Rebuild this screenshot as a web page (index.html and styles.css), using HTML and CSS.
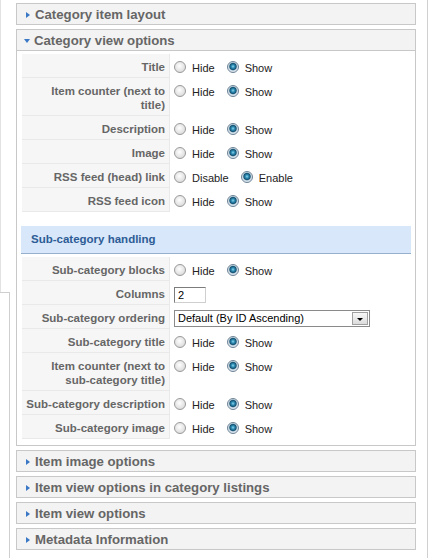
FILE: index.html
```html
<!DOCTYPE html>
<html>
<head>
<meta charset="utf-8">
<link rel="stylesheet" href="styles.css">
</head>
<body>
<div class="page">
  <div class="side"><div class="side-top"></div><div class="side-box"></div></div>
  <div class="pane">
    <div class="panel"><h3 class="panel-title"><span class="arrow-right"></span>Category item layout</h3></div>
    <div class="panel open">
      <h3 class="panel-title"><span class="arrow-down"></span>Category view options</h3>
      <div class="panel-body">
        <table class="params">
          <tr><td class="key">Title</td><td class="val"><div class="line"><span class="radio"></span><span class="lbl">Hide</span><span class="radio on"></span><span class="lbl">Show</span></div></td></tr>
          <tr><td class="key">Item counter (next to title)</td><td class="val"><div class="line"><span class="radio"></span><span class="lbl">Hide</span><span class="radio on"></span><span class="lbl">Show</span></div></td></tr>
          <tr><td class="key">Description</td><td class="val"><div class="line"><span class="radio"></span><span class="lbl">Hide</span><span class="radio on"></span><span class="lbl">Show</span></div></td></tr>
          <tr><td class="key">Image</td><td class="val"><div class="line"><span class="radio"></span><span class="lbl">Hide</span><span class="radio on"></span><span class="lbl">Show</span></div></td></tr>
          <tr><td class="key">RSS feed (head) link</td><td class="val"><div class="line"><span class="radio"></span><span class="lbl">Disable</span><span class="radio on"></span><span class="lbl">Enable</span></div></td></tr>
          <tr><td class="key">RSS feed icon</td><td class="val"><div class="line"><span class="radio"></span><span class="lbl">Hide</span><span class="radio on"></span><span class="lbl">Show</span></div></td></tr>
        </table>
        <div class="subhead">Sub-category handling</div>
        <table class="params">
          <tr><td class="key">Sub-category blocks</td><td class="val"><div class="line"><span class="radio"></span><span class="lbl">Hide</span><span class="radio on"></span><span class="lbl">Show</span></div></td></tr>
          <tr><td class="key">Columns</td><td class="val"><div class="line"><span class="input">2</span></div></td></tr>
          <tr><td class="key">Sub-category ordering</td><td class="val"><div class="line"><span class="select"><span class="select-text">Default (By ID Ascending)</span><span class="select-btn"><span class="tri"></span></span></span></div></td></tr>
          <tr><td class="key">Sub-category title</td><td class="val"><div class="line"><span class="radio"></span><span class="lbl">Hide</span><span class="radio on"></span><span class="lbl">Show</span></div></td></tr>
          <tr><td class="key">Item counter (next to sub-category title)</td><td class="val"><div class="line"><span class="radio"></span><span class="lbl">Hide</span><span class="radio on"></span><span class="lbl">Show</span></div></td></tr>
          <tr><td class="key">Sub-category description</td><td class="val"><div class="line"><span class="radio"></span><span class="lbl">Hide</span><span class="radio on"></span><span class="lbl">Show</span></div></td></tr>
          <tr><td class="key">Sub-category image</td><td class="val"><div class="line"><span class="radio"></span><span class="lbl">Hide</span><span class="radio on"></span><span class="lbl">Show</span></div></td></tr>
        </table>
      </div>
    </div>
    <div class="panel"><h3 class="panel-title"><span class="arrow-right"></span>Item image options</h3></div>
    <div class="panel"><h3 class="panel-title"><span class="arrow-right"></span>Item view options in category listings</h3></div>
    <div class="panel"><h3 class="panel-title"><span class="arrow-right"></span>Item view options</h3></div>
    <div class="panel"><h3 class="panel-title"><span class="arrow-right"></span>Metadata Information</h3></div>
  </div>
</div>
</body>
</html>
```
FILE: styles.css
```css
html, body {
  margin: 0;
  padding: 0;
  background: #fff;
  font-family: "Liberation Sans", Arial, sans-serif;
}
.page {
  display: flex;
  min-height: 558px;
}
.side {
  width: 10px;
  display: flex;
  flex-direction: column;
}
.side-top {
  height: 292px;
  border-left: 1px solid #e2e2e2;
}
.side-box {
  flex: 1;
  border-top: 1px solid #cfcfcf;
  border-right: 1px solid #cfcfcf;
}
.pane {
  width: 418px;
  box-sizing: border-box;
  padding: 3px 12px 0 6px;
  border-right: 1px solid #d0d0d0;
}
.panel {
  width: 400px;
  box-sizing: border-box;
  border: 1px solid #c8c8c8;
  background: #f3f3f3;
  margin-bottom: 4px;
}
.panel-title {
  margin: 0;
  height: 20px;
  display: flex;
  align-items: center;
  font-size: 13.2px;
  font-weight: bold;
  color: #666;
  line-height: 20px;
  padding-top: 1px;
  box-sizing: border-box;
}
.open .panel-title {
  border-bottom: 1px solid #c8c8c8;
  height: 21px;
}
.arrow-right {
  width: 0;
  height: 0;
  border-left: 4px solid #3a78c6;
  border-top: 3.5px solid transparent;
  border-bottom: 3.5px solid transparent;
  margin: 0 5px 0 9px;
}
.arrow-down {
  width: 0;
  height: 0;
  border-top: 4px solid #3a78c6;
  border-left: 3.5px solid transparent;
  border-right: 3.5px solid transparent;
  margin: 0 4px 0 7px;
}
.panel-body {
  background: #fff;
  padding: 3px 4px 6px 4px;
}
.params {
  border-collapse: collapse;
  margin-left: 1px;
}
.params td {
  vertical-align: top;
  line-height: 14px;
}
.key {
  width: 140px;
  background: #f6f6f6;
  border-bottom: 1px solid #e9e9e9;
  border-right: 1px solid #e9e9e9;
  padding: 6px 4px 3px 3px;
  text-align: right;
  font-size: 11.5px;
  font-weight: bold;
  color: #666;
}
.val {
  padding: 6px 0 3px 4px;
  font-size: 11px;
  color: #222;
  white-space: nowrap;
}
.line {
  display: flex;
  align-items: center;
  height: 14px;
}
.lbl {
  margin-right: 12px;
  line-height: 14px;
  position: relative;
  top: 1px;
}
.radio {
  flex: none;
  width: 12px;
  height: 12px;
  box-sizing: border-box;
  border-radius: 50%;
  border: 1px solid #9a9a9a;
  background: radial-gradient(circle at 45% 40%, #ffffff 0, #f0f0f0 30%, #d2d2d2 100%);
  margin-right: 6px;
}
.radio.on {
  border-color: #6f8497;
  background: radial-gradient(circle at 50% 45%, #8fd8ee 0, #2e8db5 1.6px, #165474 3.2px, #c9d8e4 4.2px, #eef3f7 6px);
}
.input {
  flex: none;
  align-self: flex-start;
  width: 32px;
  height: 16px;
  box-sizing: border-box;
  border: 1px solid;
  border-color: #7c7c7c #cfcfcf #cfcfcf #7c7c7c;
  padding-left: 3px;
  line-height: 14px;
  font-size: 11px;
  color: #000;
  margin-top: 0;
}
.select {
  flex: none;
  align-self: flex-start;
  display: flex;
  align-items: center;
  justify-content: space-between;
  width: 196px;
  height: 17px;
  box-sizing: border-box;
  border: 1px solid #8a8a8a;
  background: #fff;
  font-size: 11px;
  color: #000;
  padding: 0 1px 0 3px;
  margin-top: -1px;
}
.select-btn {
  width: 16px;
  height: 13px;
  box-sizing: border-box;
  border: 1px solid #a0a0a0;
  background: linear-gradient(#f8f8f8, #dcdcdc);
  display: flex;
  align-items: center;
  justify-content: center;
}
.tri {
  width: 0;
  height: 0;
  border-top: 3px solid #000;
  border-left: 3.5px solid transparent;
  border-right: 3.5px solid transparent;
  margin-top: 2px;
}
.subhead {
  margin-top: 14px;
  margin-bottom: 3px;
  height: 27px;
  line-height: 27px;
  background: #d8e7f9;
  border-bottom: 1px solid #95afcf;
  padding-left: 10px;
  font-size: 11.5px;
  font-weight: bold;
  color: #2d5c96;
}
```
